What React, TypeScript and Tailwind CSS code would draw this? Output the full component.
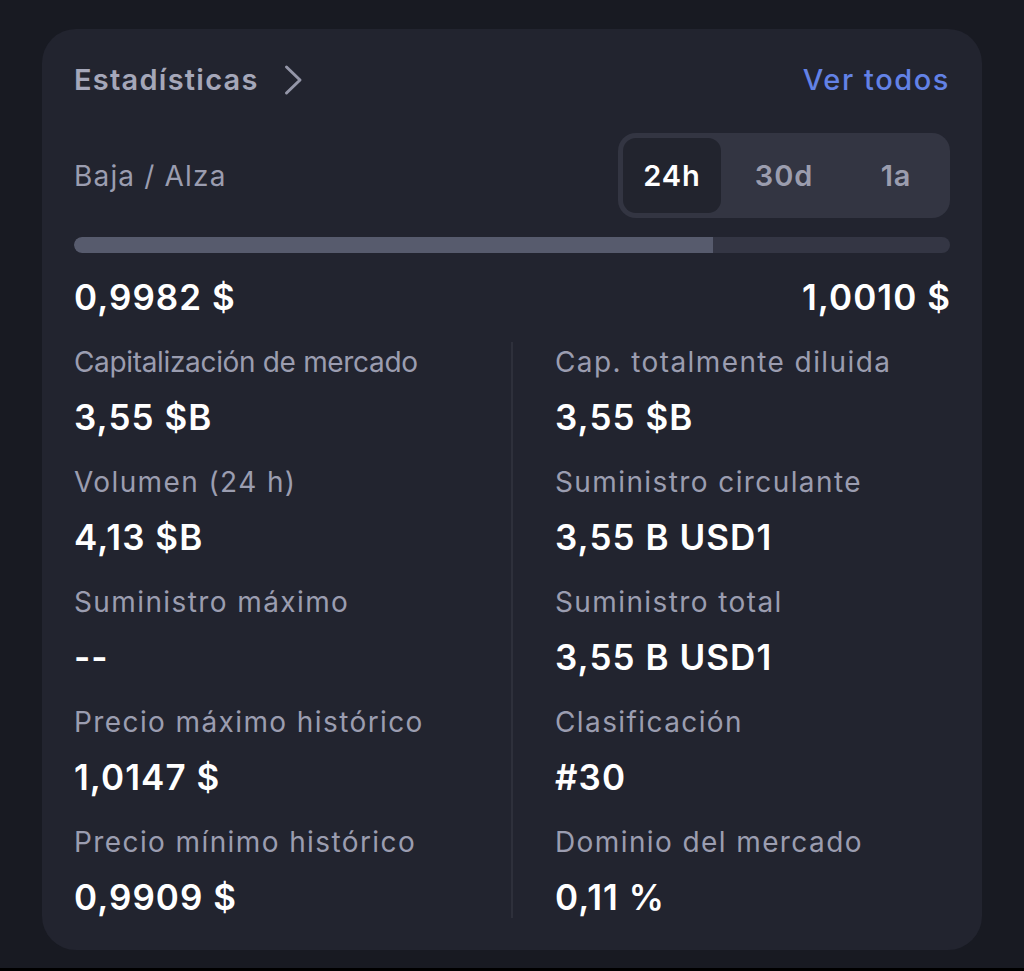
import React from "react";

const font = { fontFamily: "Inter, 'Noto Sans', sans-serif" };

function Item({ label, value, tight }: { label: string; value: string; tight?: boolean }) {
  return (
    <div className="flex flex-col">
      <div
        className={
          "h-[34px] leading-[34px] text-[28px] text-[#9b9db0] whitespace-nowrap " +
          (tight ? "tracking-[-0.012em]" : "tracking-[0.05em]")
        }
      >
        {label}
      </div>
      <div className="mt-[18px] h-[40px] leading-[40px] text-[35px] font-semibold tracking-[0.03em] text-white">{value}</div>
    </div>
  );
}

export default function App() {
  const left: [string, string, boolean?][] = [
    ["Capitalización de mercado", "3,55 $B", true],
    ["Volumen (24 h)", "4,13 $B"],
    ["Suministro máximo", "--"],
    ["Precio máximo histórico", "1,0147 $"],
    ["Precio mínimo histórico", "0,9909 $"],
  ];
  const right: [string, string, boolean?][] = [
    ["Cap. totalmente diluida", "3,55 $B"],
    ["Suministro circulante", "3,55 B USD1"],
    ["Suministro total", "3,55 B USD1"],
    ["Clasificación", "#30"],
    ["Dominio del mercado", "0,11 %"],
  ];
  return (
    <div className="w-[1024px] h-[971px] bg-[#181a22] flex flex-col" style={font}>
      <div className="mt-[29px] mx-[42px] h-[921px] rounded-[34px] bg-[#22242f] px-[32px] pt-[33px] flex flex-col">
        <div className="flex items-center justify-between h-[36px]">
          <div className="flex items-center gap-[24px]">
            <span className="text-[29px] font-semibold tracking-[0.043em] text-[#a5a7b9]">Estadísticas</span>
            <svg width="20" height="32" viewBox="0 0 20 32" fill="none">
              <path d="M3.5 3 L17 16 L3.5 29" stroke="#9496a8" strokeWidth="3" strokeLinecap="round" strokeLinejoin="round" />
            </svg>
          </div>
          <span className="text-[29px] font-medium tracking-[0.054em] text-[#6382e6]">Ver todos</span>
        </div>
        <div className="mt-[35px] flex items-center justify-between h-[85px]">
          <span className="text-[28px] tracking-[0.042em] text-[#9b9db0]">Baja / Alza</span>
          <div className="w-[332px] h-[85px] rounded-[18px] bg-[#333542] p-[5px] flex">
            <div className="w-[98px] h-[75px] rounded-[13px] bg-[#22242e] flex items-center justify-center text-[29px] font-semibold tracking-[0.03em] text-white">24h</div>
            <div className="w-[126px] flex items-center justify-center text-[29px] font-semibold tracking-[0.03em] text-[#9b9dae]">30d</div>
            <div className="flex-1 flex items-center justify-center text-[29px] font-semibold tracking-[0.03em] text-[#9b9dae]">1a</div>
          </div>
        </div>
        <div className="mt-[19px] h-[16px] rounded-full bg-[#343644] overflow-hidden flex">
          <div className="w-[639px] h-full bg-[#575b6d] rounded-l-full" />
        </div>
        <div className="mt-[24px] h-[40px] flex items-center justify-between text-[35px] font-semibold tracking-[0.03em] text-white">
          <span>0,9982 $</span>
          <span className="-mr-[1px]">1,0010 $</span>
        </div>
        <div className="mt-[25px] flex">
          <div className="w-[437px] pt-[3px] flex flex-col gap-[28px]">
            {left.map(([l, v, t]) => (
              <Item key={l} label={l} value={v} tight={t} />
            ))}
          </div>
          <div className="w-[2px] h-[576px] bg-[#2e303b]" />
          <div className="flex-1 pl-[42px] pt-[3px] flex flex-col gap-[28px]">
            {right.map(([l, v, t]) => (
              <Item key={l} label={l} value={v} tight={t} />
            ))}
          </div>
        </div>
      </div>
      <div className="mt-auto h-[3px] bg-black" />
    </div>
  );
}
